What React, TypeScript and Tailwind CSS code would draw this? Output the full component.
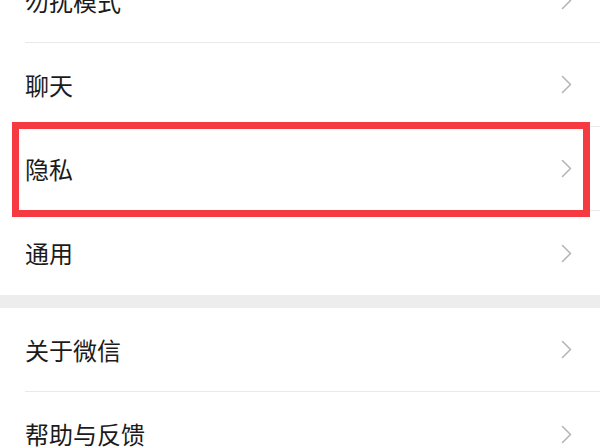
import React from "react"

const font = { fontFamily: '"Noto Sans CJK SC", "Noto Sans", sans-serif' }

function Chevron() {
  return (
    <svg width="11" height="19" viewBox="0 0 11 19" fill="none" className="shrink-0">
      <path d="M1.5 1.5 L9.5 9.5 L1.5 17.5" stroke="#b5b5b5" strokeWidth="1.6" strokeLinecap="round" strokeLinejoin="round" />
    </svg>
  )
}

function Row({ label, last = false }: { label: string; last?: boolean }) {
  return (
    <div className="bg-white pl-[25px]">
      <div className={`h-[84px] flex items-center justify-between pr-[28px] ${last ? "" : "border-b border-[#e9e9e9]"}`}>
        <span className="text-[24px] text-[#1b1b1b] leading-none">{label}</span>
        <Chevron />
      </div>
    </div>
  )
}

export default function App() {
  return (
    <div className="relative w-[600px] h-[448px] overflow-hidden bg-white" style={font}>
      <div className="-mt-[41px]">
        <Row label="勿扰模式" />
        <Row label="聊天" />
        <Row label="隐私" />
        <Row label="通用" last />
      </div>
      <div className="h-[13px] bg-[#ededed]" />
      <div>
        <Row label="关于微信" />
        <Row label="帮助与反馈" last />
      </div>
      {/* highlight box */}
      <div className="absolute left-[12px] top-[122px] w-[578px] h-[95px] border-[7px] border-[#f63a42] pointer-events-none" />
    </div>
  )
}
